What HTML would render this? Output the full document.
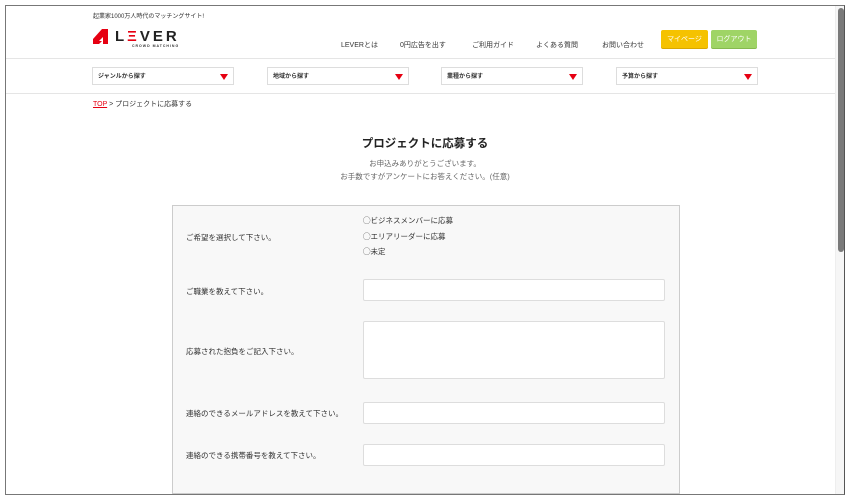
<!DOCTYPE html>
<html><head><meta charset="utf-8"><style>
*{margin:0;padding:0;box-sizing:border-box}
body{width:850px;height:500px;background:#fff;font-family:"Liberation Sans","Noto Sans CJK JP",sans-serif;color:#333;position:relative;overflow:hidden}
.frame{position:absolute;left:5px;top:5px;width:840px;height:490px;border:1px solid #777;border-right:1px solid #555;overflow:hidden;background:#fff}
.a{position:absolute}
.t{font-size:7px;white-space:nowrap}
.sel{position:absolute;top:61px;height:18px;width:142px;border:1px solid #ddd;background:#fff;font-size:6px;font-weight:bold;padding:3px 0 0 5px}
.sel:after{content:"";position:absolute;right:5px;top:6px;border-left:4px solid transparent;border-right:4px solid transparent;border-top:6px solid #e60012}
.lbl{position:absolute;left:13px;font-size:7.5px;color:#333;white-space:nowrap}
.inp{position:absolute;left:190px;width:302px;background:#fff;border:1px solid #ddd;border-radius:2px}
.btn{display:flex;align-items:center;justify-content:center;color:#fff;font-size:7px;border-radius:2px}
</style></head><body>
<div class="frame">
<div class="a t" style="left:87px;top:5px;font-size:6px">起業家1000万人時代のマッチングサイト!</div>
<svg class="a" style="left:87px;top:22px" width="17" height="17" viewBox="0 0 17 17"><path d="M0 11 L9 1 L15 1 L15 16 L10 16 L10 9 L6 13 L9 13 L6 16 L0 16Z" fill="#e60012"/></svg>
<div class="a" style="left:109px;top:22px;font-size:15px;font-weight:bold;letter-spacing:3px;color:#222">L<span style="color:#e60012">Ξ</span>VER</div>
<div class="a" style="left:126px;top:38px;font-size:3.5px;font-weight:bold;letter-spacing:1px">CROWD MATCHING</div>
<div class="a t" style="left:335px;top:34px">LEVERとは</div>
<div class="a t" style="left:394px;top:34px">0円広告を出す</div>
<div class="a t" style="left:466px;top:34px">ご利用ガイド</div>
<div class="a t" style="left:530px;top:34px">よくある質問</div>
<div class="a t" style="left:596px;top:34px">お問い合わせ</div>
<div class="a btn" style="left:655px;top:24px;width:47px;height:18px;background:#f5c200;box-shadow:0 1px 0 #d9a800">マイページ</div>
<div class="a btn" style="left:705px;top:24px;width:46px;height:18px;background:#9fd466;box-shadow:0 1px 0 #86b94f">ログアウト</div>
<div class="a" style="left:0;top:52px;width:832px;height:36px;border-top:1px solid #e5e5e5;border-bottom:1px solid #e5e5e5;background:#fff"></div>
<div class="sel" style="left:86px">ジャンルから探す</div>
<div class="sel" style="left:261px">地域から探す</div>
<div class="sel" style="left:435px">業種から探す</div>
<div class="sel" style="left:610px">予算から探す</div>
<div class="a t" style="left:87px;top:93px;font-size:7px"><span style="color:#e60012;text-decoration:underline">TOP</span> &gt; プロジェクトに応募する</div>
<div class="a" style="left:0;top:129px;width:838px;text-align:center;font-size:11.5px;font-weight:bold;color:#222">プロジェクトに応募する</div>
<div class="a" style="left:0;top:151px;width:838px;text-align:center;font-size:7.5px;color:#666;line-height:13px">お申込みありがとうございます。<br>お手数ですがアンケートにお答えください。(任意)</div>
<div class="a" style="left:166px;top:199px;width:508px;height:289px;background:#f8f8f8;border:1px solid #ccc">
<div class="lbl" style="top:26px">ご希望を選択して下さい。</div>
<div class="a" style="left:190px;top:7px;font-size:7.5px;line-height:15.5px;white-space:nowrap">◯ビジネスメンバーに応募<br>◯エリアリーダーに応募<br>◯未定</div>
<div class="lbl" style="top:80px">ご職業を教えて下さい。</div>
<div class="inp" style="top:73px;height:22px"></div>
<div class="lbl" style="top:140px">応募された抱負をご記入下さい。</div>
<div class="inp" style="top:115px;height:58px"></div>
<div class="lbl" style="top:202px">連絡のできるメールアドレスを教えて下さい。</div>
<div class="inp" style="top:196px;height:22px"></div>
<div class="lbl" style="top:244px">連絡のできる携帯番号を教えて下さい。</div>
<div class="inp" style="top:238px;height:22px"></div>
</div>
<div class="a" style="left:829px;top:0;width:9px;height:490px;background:#f6f6f6;border-left:1px solid #eee"></div>
<div class="a" style="left:832px;top:2px;width:6px;height:244px;background:#7a7a7a;border-radius:3px"></div>
</div>
</body></html>
